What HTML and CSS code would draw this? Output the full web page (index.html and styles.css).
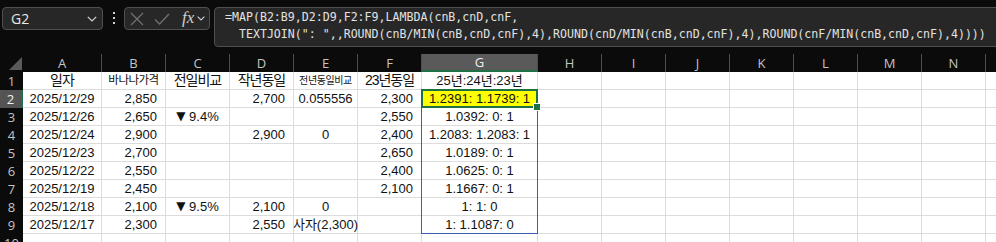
FILE: index.html
```html
<!DOCTYPE html>
<html lang="ko">
<head>
<meta charset="utf-8">
<link rel="stylesheet" href="styles.css">
</head>
<body>
<div class="toolbar">
  <div class="namebox"><span>G2</span><svg width="10" height="6" viewBox="0 0 10 6"><path d="M0.8 0.8L5 5L9.2 0.8" fill="none" stroke="#d4d4d4" stroke-width="1.2"/></svg></div>
  <div class="dots"><i></i><i></i><i></i></div>
  <div class="fxbox">
    <svg class="ic-x" width="14" height="14" viewBox="0 0 14 14"><path d="M1 1L13 13M13 1L1 13" fill="none" stroke="#707070" stroke-width="1.3"/></svg>
    <svg class="ic-ok" width="16" height="12" viewBox="0 0 16 12"><path d="M1 6.5L5.5 11L15 1" fill="none" stroke="#707070" stroke-width="1.3"/></svg>
    <span class="fx">fx</span>
    <svg width="8" height="5" viewBox="0 0 8 5"><path d="M0.6 0.6L4 4L7.4 0.6" fill="none" stroke="#cfcfcf" stroke-width="1.1"/></svg>
  </div>
  <div class="formula"><div>=MAP(B2:B9,D2:D9,F2:F9,LAMBDA(cnB,cnD,cnF,</div><div>  TEXTJOIN(": ",,ROUND(cnB/MIN(cnB,cnD,cnF),4),ROUND(cnD/MIN(cnB,cnD,cnF),4),ROUND(cnF/MIN(cnB,cnD,cnF),4))))</div></div>
</div>

<div class="sheet">
  <div class="corner"><svg width="13" height="13" viewBox="0 0 13 13"><path d="M13 0V13H0Z" fill="#5a5a5a"/></svg></div>
  <div class="ch">A</div><div class="ch">B</div><div class="ch">C</div><div class="ch">D</div><div class="ch">E</div><div class="ch">F</div><div class="ch sel">G</div><div class="ch">H</div><div class="ch">I</div><div class="ch">J</div><div class="ch">K</div><div class="ch">L</div><div class="ch">M</div><div class="ch">N</div><div class="ch last"></div>

  <div class="rh">1</div>
  <div class="c m big">일자</div><div class="c m mid">바나나가격</div><div class="c m big">전일비교</div><div class="c m big">작년동일</div><div class="c m tiny">전년동일비교</div><div class="c m big">23년동일</div><div class="c m">25년:24년:23년</div>
  <div class="c"></div><div class="c"></div><div class="c"></div><div class="c"></div><div class="c"></div><div class="c"></div><div class="c"></div><div class="c"></div>

  <div class="rh sel">2</div>
  <div class="c m">2025/12/29</div><div class="c r">2,850</div><div class="c"></div><div class="c r">2,700</div><div class="c m">0.055556</div><div class="c r">2,300</div><div class="c m yellow active">1.2391: 1.1739: 1<span class="spill"></span><span class="selection"><span class="handle"></span></span></div>
  <div class="c"></div><div class="c"></div><div class="c"></div><div class="c"></div><div class="c"></div><div class="c"></div><div class="c"></div><div class="c"></div>

  <div class="rh">3</div>
  <div class="c m">2025/12/26</div><div class="c r">2,650</div><div class="c m"><span class="tri">▼</span> 9.4%</div><div class="c"></div><div class="c"></div><div class="c r">2,550</div><div class="c m">1.0392: 0: 1</div>
  <div class="c"></div><div class="c"></div><div class="c"></div><div class="c"></div><div class="c"></div><div class="c"></div><div class="c"></div><div class="c"></div>

  <div class="rh">4</div>
  <div class="c m">2025/12/24</div><div class="c r">2,900</div><div class="c"></div><div class="c r">2,900</div><div class="c m">0</div><div class="c r">2,400</div><div class="c m">1.2083: 1.2083: 1</div>
  <div class="c"></div><div class="c"></div><div class="c"></div><div class="c"></div><div class="c"></div><div class="c"></div><div class="c"></div><div class="c"></div>

  <div class="rh">5</div>
  <div class="c m">2025/12/23</div><div class="c r">2,700</div><div class="c"></div><div class="c"></div><div class="c"></div><div class="c r">2,650</div><div class="c m">1.0189: 0: 1</div>
  <div class="c"></div><div class="c"></div><div class="c"></div><div class="c"></div><div class="c"></div><div class="c"></div><div class="c"></div><div class="c"></div>

  <div class="rh">6</div>
  <div class="c m">2025/12/22</div><div class="c r">2,550</div><div class="c"></div><div class="c"></div><div class="c"></div><div class="c r">2,400</div><div class="c m">1.0625: 0: 1</div>
  <div class="c"></div><div class="c"></div><div class="c"></div><div class="c"></div><div class="c"></div><div class="c"></div><div class="c"></div><div class="c"></div>

  <div class="rh">7</div>
  <div class="c m">2025/12/19</div><div class="c r">2,450</div><div class="c"></div><div class="c"></div><div class="c"></div><div class="c r">2,100</div><div class="c m">1.1667: 0: 1</div>
  <div class="c"></div><div class="c"></div><div class="c"></div><div class="c"></div><div class="c"></div><div class="c"></div><div class="c"></div><div class="c"></div>

  <div class="rh">8</div>
  <div class="c m">2025/12/18</div><div class="c r">2,100</div><div class="c m"><span class="tri">▼</span> 9.5%</div><div class="c r">2,100</div><div class="c m">0</div><div class="c"></div><div class="c m">1: 1: 0</div>
  <div class="c"></div><div class="c"></div><div class="c"></div><div class="c"></div><div class="c"></div><div class="c"></div><div class="c"></div><div class="c"></div>

  <div class="rh">9</div>
  <div class="c m">2025/12/17</div><div class="c r">2,300</div><div class="c"></div><div class="c r">2,550</div><div class="c m">사자(2,300)</div><div class="c"></div><div class="c m">1: 1.1087: 0</div>
  <div class="c"></div><div class="c"></div><div class="c"></div><div class="c"></div><div class="c"></div><div class="c"></div><div class="c"></div><div class="c"></div>

  <div class="rh">10</div>
  <div class="c"></div><div class="c"></div><div class="c"></div><div class="c"></div><div class="c"></div><div class="c"></div><div class="c"></div>
  <div class="c"></div><div class="c"></div><div class="c"></div><div class="c"></div><div class="c"></div><div class="c"></div><div class="c"></div><div class="c"></div>
</div>
</body>
</html>
```

FILE: styles.css
```css
html, body {
  margin: 0;
  padding: 0;
}
body {
  background: #0b0b0b;
  width: 996px;
  height: 242px;
  overflow: hidden;
  font-family: "Noto Sans CJK KR", sans-serif;
}

/* ---------- formula bar ---------- */
.toolbar {
  display: flex;
  align-items: flex-start;
  height: 54px;
  padding-top: 7px;
  box-sizing: border-box;
}
.namebox {
  margin-left: 2px;
  width: 101px;
  height: 23px;
  box-sizing: border-box;
  border: 1px solid #4f4f4f;
  border-radius: 4px;
  background: #272727;
  display: flex;
  align-items: center;
  justify-content: space-between;
  padding: 0 5px 0 8px;
  color: #e8e8e8;
  font-family: "Open Sans", sans-serif;
  font-size: 14px;
}
.dots {
  margin-left: 9px;
  margin-top: 5px;
  width: 4px;
  display: flex;
  flex-direction: column;
  align-items: center;
  gap: 3px;
}
.dots i {
  display: block;
  width: 2px;
  height: 2px;
  background: #d0d0d0;
}
.fxbox {
  margin-left: 8px;
  width: 86px;
  height: 23px;
  box-sizing: border-box;
  border: 1px solid #4f4f4f;
  border-radius: 4px;
  background: #272727;
  display: flex;
  align-items: center;
  padding-left: 5px;
}
.ic-ok { margin-left: 10px; }
.fx {
  margin-left: 12px;
  margin-right: 3px;
  font-family: "Liberation Serif", serif;
  font-style: italic;
  font-size: 17px;
  color: #cfcfcf;
  line-height: 1;
  margin-top: -2px;
}
.formula {
  margin-left: 4px;
  flex: 1;
  margin-right: -12px;
  height: 40px;
  box-sizing: border-box;
  border: 1px solid #4f4f4f;
  border-radius: 4px;
  background: #272727;
  padding: 1px 0 0 10px;
  font-family: "DejaVu Sans Mono", monospace;
  font-size: 11.6px;
  line-height: 17px;
  color: #e2e2e2;
  white-space: pre;
}

/* ---------- sheet ---------- */
.sheet {
  display: grid;
  grid-template-columns: 23px 79px 64px 64px 64px 64px 64px 116px repeat(7, 64px) 10px;
  grid-template-rows: repeat(11, 18px);
  font-size: 13px;
}
.corner {
  background: #0b0b0b;
  display: flex;
  align-items: flex-end;
  justify-content: flex-end;
  padding: 0 1px 2px 0;
}
.ch {
  background: #0b0b0b;
  color: #c4c4c4;
  font-family: "Open Sans", sans-serif;
  font-size: 13px;
  display: flex;
  align-items: center;
  justify-content: center;
  border-right: 1px solid #4d4d4d;
  box-sizing: border-box;
}
.ch.last { border-right: none; }
.ch.sel {
  background: #5a5a5a;
  color: #f0f0f0;
  border-bottom: 2px solid #1e7145;
}
.rh {
  background: #0b0b0b;
  color: #c4c4c4;
  font-family: "Open Sans", sans-serif;
  font-size: 13px;
  display: flex;
  align-items: center;
  justify-content: center;
}
.rh.sel {
  background: #545454;
  color: #f0f0f0;
  border-right: 2px solid #1e7145;
}
.c {
  background: #fff;
  border-right: 1px solid #dcdcdc;
  border-bottom: 1px solid #dcdcdc;
  box-sizing: border-box;
  display: flex;
  align-items: center;
  padding: 0 8px;
  white-space: pre;
  min-width: 0;
  color: #111;
  line-height: 17px;
  font-family: "Liberation Sans", "Noto Sans CJK KR", sans-serif;
  font-size: 13px;
}
.c.r { justify-content: flex-end; }
.c.m { justify-content: center; padding: 0; }
.c.big { font-size: 14px; letter-spacing: -1px; }
.c.mid { font-size: 11.5px; letter-spacing: -0.5px; }
.c.tiny { font-size: 10px; letter-spacing: -0.4px; }
.c.yellow { background: #ffff00; }
.c.active { position: relative; }
.tri {
  font-family: "DejaVu Sans", sans-serif;
  font-size: 12px;
}

.spill {
  position: absolute;
  left: -1px;
  top: -1px;
  width: 117px;
  height: 145px;
  box-sizing: border-box;
  border: 1px solid #3b5fae;
  z-index: 2;
}
.selection {
  position: absolute;
  left: -1px;
  top: -1px;
  width: 117px;
  height: 19px;
  box-sizing: border-box;
  border: 2px solid #1e7145;
  z-index: 3;
}
.handle {
  position: absolute;
  right: -5px;
  bottom: -5px;
  width: 6px;
  height: 6px;
  background: #1e7145;
  border: 1px solid #fff;
}
```
